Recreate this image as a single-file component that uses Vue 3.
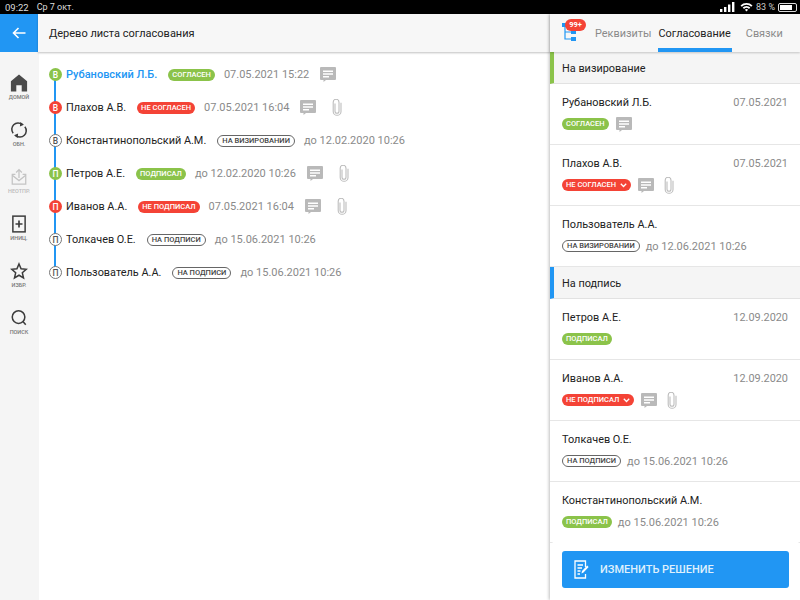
<script setup>
const nav = [
  { key: 'home', label: 'ДОМОЙ' },
  { key: 'sync', label: 'ОБН.' },
  { key: 'outbox', label: 'НЕОТПР.', muted: true },
  { key: 'add', label: 'ИНИЦ.' },
  { key: 'star', label: 'ИЗБР.' },
  { key: 'search', label: 'ПОИСК' },
]

const tree = [
  { mark: 'В', kind: 'green', name: 'Рубановский Л.Б.', link: true, status: 'СОГЛАСЕН', date: '07.05.2021 15:22', comment: true },
  { mark: 'В', kind: 'red', name: 'Плахов А.В.', status: 'НЕ СОГЛАСЕН', date: '07.05.2021 16:04', comment: true, clip: true },
  { mark: 'В', kind: 'plain', name: 'Константинопольский А.М.', status: 'НА ВИЗИРОВАНИИ', date: 'до 12.02.2020 10:26' },
  { mark: 'П', kind: 'green', name: 'Петров А.Е.', status: 'ПОДПИСАЛ', date: 'до 12.02.2020 10:26', comment: true, clip: true },
  { mark: 'П', kind: 'red', name: 'Иванов А.А.', status: 'НЕ ПОДПИСАЛ', date: '07.05.2021 16:04', comment: true, clip: true },
  { mark: 'П', kind: 'plain', name: 'Толкачев О.Е.', status: 'НА ПОДПИСИ', date: 'до 15.06.2021 10:26' },
  { mark: 'П', kind: 'plain', name: 'Пользователь А.А.', status: 'НА ПОДПИСИ', date: 'до 15.06.2021 10:26' },
]

const sections = [
  {
    title: 'На визирование',
    tone: 'green',
    items: [
      { name: 'Рубановский Л.Б.', date: '07.05.2021', kind: 'green', status: 'СОГЛАСЕН', comment: true },
      { name: 'Плахов А.В.', date: '07.05.2021', kind: 'red', status: 'НЕ СОГЛАСЕН', more: true, comment: true, clip: true },
      { name: 'Пользователь А.А.', kind: 'plain', status: 'НА ВИЗИРОВАНИИ', due: 'до 12.06.2021 10:26' },
    ],
  },
  {
    title: 'На подпись',
    tone: 'blue',
    items: [
      { name: 'Петров А.Е.', date: '12.09.2020', kind: 'green', status: 'ПОДПИСАЛ' },
      { name: 'Иванов А.А.', date: '12.09.2020', kind: 'red', status: 'НЕ ПОДПИСАЛ', more: true, comment: true, clip: true },
      { name: 'Толкачев О.Е.', kind: 'plain', status: 'НА ПОДПИСИ', due: 'до 15.06.2021 10:26' },
      { name: 'Константинопольский А.М.', kind: 'green', status: 'ПОДПИСАЛ', due: 'до 15.06.2021 10:26' },
    ],
  },
]
</script>

<template>
  <div class="screen">
    <div class="status-bar">
      <span class="clock">09:22</span>
      <span class="day">Ср 7 окт.</span>
      <span class="spacer"></span>
      <svg width="15" height="10" viewBox="0 0 15 10">
        <rect x="0" y="7" width="2.4" height="3" fill="#fff" />
        <rect x="4" y="5" width="2.4" height="5" fill="#fff" />
        <rect x="8" y="2.5" width="2.4" height="7.5" fill="#fff" />
        <rect x="12" y="0" width="2.4" height="10" fill="#fff" />
      </svg>
      <svg class="wifi" width="13" height="10" viewBox="0 0 13 10">
        <path d="M0.5 3.4 A8.5 8.5 0 0 1 12.5 3.4 L11.2 4.8 A6.6 6.6 0 0 0 1.8 4.8Z" fill="#fff" />
        <path d="M2.7 5.6 A5.4 5.4 0 0 1 10.3 5.6 L9 7 A3.5 3.5 0 0 0 4 7Z" fill="#fff" />
        <path d="M4.9 7.8 A2.3 2.3 0 0 1 8.1 7.8 L6.5 9.6Z" fill="#fff" />
      </svg>
      <span class="battery-text">83 %</span>
      <span class="battery"><span class="battery-fill"></span></span>
    </div>

    <div class="body">
      <aside class="rail">
        <button class="back">
          <svg width="14" height="12" viewBox="0 0 14 12" fill="none" stroke="#fff" stroke-width="1.6">
            <path d="M13.5 6H1.5M6.5 1L1.5 6L6.5 11" />
          </svg>
        </button>
        <nav class="rail-nav">
          <div v-for="n in nav" :key="n.key" class="nav-item" :class="{ muted: n.muted }">
            <svg v-if="n.key === 'home'" width="18" height="18" viewBox="0 0 20 20">
              <path d="M10 0.5L19 8V19.5H13V12.5H7V19.5H1V8Z" fill="#4a4a4a" />
            </svg>
            <svg v-else-if="n.key === 'sync'" width="18" height="18" viewBox="0 0 20 20" fill="none" stroke="#3c3c3c" stroke-width="1.7">
              <path d="M3.5 13.5A7 7 0 0 1 13.5 3.8" />
              <path d="M16.5 6.5A7 7 0 0 1 6.5 16.2" />
              <path d="M11.5 1L15.5 4.2L11 6.2Z" fill="#3c3c3c" stroke="none" />
              <path d="M8.5 19L4.5 15.8L9 13.8Z" fill="#3c3c3c" stroke="none" />
            </svg>
            <svg v-else-if="n.key === 'outbox'" width="18" height="18" viewBox="0 0 20 20" fill="none" stroke="#c4c4c4" stroke-width="1.4">
              <path d="M6 7H2.5V18H17.5V7H14" />
              <path d="M2.5 8L10 14L17.5 8" />
              <path d="M10 11V2M6.8 5L10 1.8L13.2 5" />
            </svg>
            <svg v-else-if="n.key === 'add'" width="14" height="18" viewBox="0 0 16 20" fill="none" stroke="#3c3c3c">
              <rect x="1" y="1" width="14" height="18" stroke-width="1.7" />
              <path d="M8 6V14M4 10H12" stroke-width="1.9" />
            </svg>
            <svg v-else-if="n.key === 'star'" width="18" height="18" viewBox="0 0 20 20" fill="none" stroke="#3c3c3c" stroke-width="1.7">
              <path d="M10 2.2L12.3 7.6L18 8.1L13.7 12L15 17.7L10 14.7L5 17.7L6.3 12L2 8.1L7.7 7.6Z" />
            </svg>
            <svg v-else width="18" height="18" viewBox="0 0 20 20" fill="none" stroke="#3c3c3c" stroke-width="1.7">
              <circle cx="9.5" cy="9" r="7" />
              <path d="M14.4 14L17.5 17.5" />
            </svg>
            <span class="nav-label">{{ n.label }}</span>
          </div>
        </nav>
      </aside>

      <main class="main">
        <header class="main-head">Дерево листа согласования</header>
        <ul class="tree">
          <li v-for="(row, i) in tree" :key="i" class="tree-row" :class="{ last: i === tree.length - 1 }">
            <span class="mark" :class="row.kind">{{ row.mark }}</span>
            <span class="tree-name" :class="{ link: row.link }">{{ row.name }}</span>
            <span class="badge" :class="row.kind">{{ row.status }}</span>
            <span class="tree-date">{{ row.date }}</span>
            <svg v-if="row.comment" class="comment tree-comment" width="16" height="15" viewBox="0 0 16 15">
              <path d="M1 0H15A1 1 0 0 1 16 1V12A1 1 0 0 1 15 13H6L3.5 15V13H1A1 1 0 0 1 0 12V1A1 1 0 0 1 1 0Z" fill="#b9b9b9" />
              <path d="M3 3.5H13V5H3ZM3 6.2H13V7.7H3ZM3 8.9H9V10.4H3Z" fill="#fff" />
            </svg>
            <svg v-if="row.clip" class="tree-clip" width="10" height="17" viewBox="0 0 10 17" fill="none" stroke="#bdbdbd" stroke-width="1.1">
              <path d="M3 4.5V12.2A2 2 0 0 0 7 12.2V3.2A2.6 2.6 0 0 0 1.2 3.2V12.4A3.8 3.8 0 0 0 9 12.4V3.8" />
            </svg>
          </li>
        </ul>
      </main>

      <section class="panel">
        <header class="panel-head">
          <div class="tree-icon">
            <svg width="15" height="21" viewBox="0 0 15 21" fill="none">
              <path d="M3 3V17H10M3 10H10" stroke="#2196f3" stroke-width="1.2" />
              <rect x="0" y="1" width="5" height="4" fill="#2196f3" />
              <rect x="9" y="8" width="5" height="4" fill="#2196f3" />
              <rect x="9" y="15" width="5" height="4" fill="#2196f3" />
            </svg>
            <span class="count">99+</span>
          </div>
          <a class="tab">Реквизиты</a>
          <a class="tab active">Согласование</a>
          <a class="tab">Связки</a>
        </header>

        <div class="panel-list">
          <template v-for="s in sections" :key="s.title">
            <h3 class="section" :class="s.tone">{{ s.title }}</h3>
            <article v-for="item in s.items" :key="item.name" class="card">
              <div class="card-top">
                <span class="card-name">{{ item.name }}</span>
                <span v-if="item.date" class="card-date">{{ item.date }}</span>
              </div>
              <div class="card-bottom">
                <span class="badge" :class="item.kind">
                  {{ item.status }}
                  <svg v-if="item.more" class="chev" width="7" height="5" viewBox="0 0 7 5" fill="none" stroke="#fff" stroke-width="1.3">
                    <path d="M0.8 0.8L3.5 3.5L6.2 0.8" />
                  </svg>
                </span>
                <span v-if="item.due" class="card-due">{{ item.due }}</span>
                <svg v-if="item.comment" class="comment card-comment" width="16" height="15" viewBox="0 0 16 15">
                  <path d="M1 0H15A1 1 0 0 1 16 1V12A1 1 0 0 1 15 13H6L3.5 15V13H1A1 1 0 0 1 0 12V1A1 1 0 0 1 1 0Z" fill="#b9b9b9" />
                  <path d="M3 3.5H13V5H3ZM3 6.2H13V7.7H3ZM3 8.9H9V10.4H3Z" fill="#fff" />
                </svg>
                <svg v-if="item.clip" class="card-clip" width="10" height="17" viewBox="0 0 10 17" fill="none" stroke="#bdbdbd" stroke-width="1.1">
                  <path d="M3 4.5V12.2A2 2 0 0 0 7 12.2V3.2A2.6 2.6 0 0 0 1.2 3.2V12.4A3.8 3.8 0 0 0 9 12.4V3.8" />
                </svg>
              </div>
            </article>
          </template>
        </div>

        <button class="decision">
          <svg width="15" height="19" viewBox="0 0 15 19" fill="none" stroke="#fff" stroke-width="1.3">
            <path d="M11.5 7V1H1V18H11.5V14" />
            <path d="M3.5 5H9M3.5 8H8M3.5 11H6.5M3.5 14H6" />
            <path d="M7.5 13.5L8 11L13.2 5.6L14.6 7L9.5 12.6Z" fill="#fff" stroke="none" />
          </svg>
          ИЗМЕНИТЬ РЕШЕНИЕ
        </button>
      </section>
    </div>
  </div>
</template>

<style>
html, body {
  margin: 0;
  background: #fff;
  overflow: hidden;
}
</style>

<style scoped>
* {
  box-sizing: border-box;
}

.screen {
  width: 800px;
  height: 600px;
  display: flex;
  flex-direction: column;
  font-family: Roboto, "Liberation Sans", sans-serif;
  color: #222;
  overflow: hidden;
}

.status-bar {
  height: 14px;
  background: #000;
  color: #ddd;
  display: flex;
  align-items: center;
  padding: 0 3px 0 5px;
  font-size: 9px;
  flex: none;
}

.clock {
  font-size: 9.5px;
  margin-right: 8px;
}

.spacer {
  flex: 1;
}

.wifi {
  margin-left: 5px;
}

.battery-text {
  margin-left: 3px;
  color: #ccc;
}

.battery {
  width: 19px;
  height: 9px;
  margin-left: 3px;
  border: 1px solid #ddd;
  border-radius: 2px;
  padding: 1px;
  display: block;
}

.battery-fill {
  display: block;
  width: 80%;
  height: 100%;
  background: #fff;
}

.body {
  flex: 1;
  display: flex;
  min-height: 0;
}

.rail {
  width: 39px;
  flex: none;
  background: #f5f5f5;
  display: flex;
  flex-direction: column;
}

.back {
  height: 38px;
  width: 38px;
  border: none;
  padding: 0;
  background: #2196f3;
  display: flex;
  align-items: center;
  justify-content: center;
  flex: none;
}

.rail-nav {
  display: flex;
  flex-direction: column;
  align-items: center;
  gap: 20px;
  padding: 22px 1px 0 0;
}

.nav-item {
  height: 27px;
  display: flex;
  flex-direction: column;
  align-items: center;
  justify-content: space-between;
}

.nav-label {
  font-size: 5.5px;
  font-weight: 500;
  line-height: 7px;
  color: #777;
}

.nav-item.muted .nav-label {
  color: #bbb;
}

.main {
  width: 511px;
  flex: none;
  display: flex;
  flex-direction: column;
}

.main-head {
  height: 38px;
  flex: none;
  background: #f7f7f7;
  padding-left: 11px;
  display: flex;
  align-items: center;
  font-size: 11px;
  box-shadow: 0 1px 2px rgba(0, 0, 0, 0.25);
  margin-left: -1px;
  position: relative;
}

.tree {
  list-style: none;
  margin: 0;
  padding: 6px 0 0 10px;
}

.tree-row {
  height: 33px;
  display: flex;
  align-items: center;
  position: relative;
}

.tree-row::before {
  content: "";
  position: absolute;
  left: 5px;
  top: 16px;
  width: 2px;
  height: 33px;
  background: #2196f3;
}

.tree-row.last::before {
  display: none;
}

.mark {
  width: 13px;
  height: 13px;
  border-radius: 50%;
  font-size: 8.5px;
  font-weight: 500;
  display: flex;
  align-items: center;
  justify-content: center;
  color: #fff;
  position: relative;
  flex: none;
}

.mark.green {
  background: #8bc34a;
}

.mark.red {
  background: #f44336;
}

.mark.plain {
  background: #fff;
  border: 1px solid #777;
  color: #555;
}

.tree-name {
  margin-left: 4px;
  font-size: 10.9px;
  color: #222;
}

.tree-name.link {
  color: #2196f3;
  font-weight: 500;
  font-size: 11px;
}

.badge {
  height: 12px;
  border-radius: 6px;
  font-size: 7.5px;
  font-weight: 500;
  line-height: 12px;
  padding: 0 4px;
  display: inline-flex;
  align-items: center;
  white-space: nowrap;
  color: #fff;
  flex: none;
}

.badge.green {
  background: #8bc34a;
}

.badge.red {
  background: #f44336;
}

.badge.plain {
  background: #fff;
  border: 1px solid #666;
  color: #444;
}

.tree-row .badge {
  margin-left: 11px;
}

.tree-date {
  margin-left: 9px;
  font-size: 11px;
  color: #8a8a8a;
}

.tree-comment {
  margin-left: 11px;
}

.tree-clip {
  margin-left: 16px;
}

.panel {
  width: 250px;
  flex: none;
  display: flex;
  flex-direction: column;
  position: relative;
  box-shadow: -1px 0 3px rgba(0, 0, 0, 0.25);
  background: #fff;
}

.panel-head {
  height: 38px;
  flex: none;
  background: #f7f7f7;
  display: flex;
  align-items: stretch;
  font-size: 10.9px;
  box-shadow: 0 1px 2px rgba(0, 0, 0, 0.2);
  position: relative;
  padding-left: 12px;
}

.tree-icon {
  width: 32px;
  position: relative;
  padding-top: 8px;
}

.count {
  position: absolute;
  left: 3px;
  top: 5px;
  width: 21px;
  height: 12px;
  border-radius: 6px;
  background: #f44336;
  color: #fff;
  font-size: 7.5px;
  font-weight: 700;
  line-height: 12px;
  text-align: center;
}

.tab {
  color: #8a8a8a;
  padding: 0 1px;
  display: flex;
  align-items: center;
  margin-right: 5px;
}

.tab.active {
  color: #222;
  box-shadow: inset 0 -4px 0 #2196f3;
  margin-right: 13px;
}

.panel-list {
  flex: 1;
  min-height: 0;
  overflow: hidden;
}

.section {
  margin: 0;
  height: 32px;
  background: #f5f5f5;
  border-left: 4px solid #8bc34a;
  border-bottom: 1px solid #e2e2e2;
  padding: 1px 0 0 8px;
  display: flex;
  align-items: center;
  font-size: 10.9px;
  font-weight: 400;
}

.section.blue {
  border-left-color: #2196f3;
}

.card {
  height: 61px;
  padding: 11px 12px 0 12px;
  border-bottom: 1px solid #e6e6e6;
}

.card-top {
  display: flex;
  justify-content: space-between;
  align-items: center;
  height: 15px;
  font-size: 10.9px;
}

.card-date {
  color: #8a8a8a;
}

.card-bottom {
  display: flex;
  align-items: center;
  height: 16px;
  margin-top: 6px;
}

.card-due {
  margin-left: 6px;
  font-size: 11px;
  color: #8a8a8a;
}

.chev {
  margin-left: 4px;
}

.card-comment {
  margin-left: 7px;
}

.card-clip {
  margin-left: 10px;
}

.decision {
  position: absolute;
  left: 12px;
  right: 11px;
  bottom: 12px;
  height: 37px;
  border: none;
  border-radius: 3px;
  background: #2196f3;
  color: #dff0fd;
  font-family: inherit;
  font-size: 11px;
  font-weight: 500;
  display: flex;
  align-items: center;
  gap: 11px;
  padding: 0 0 0 12px;
  box-shadow: 0 0 0 12px #fff;
}
</style>
